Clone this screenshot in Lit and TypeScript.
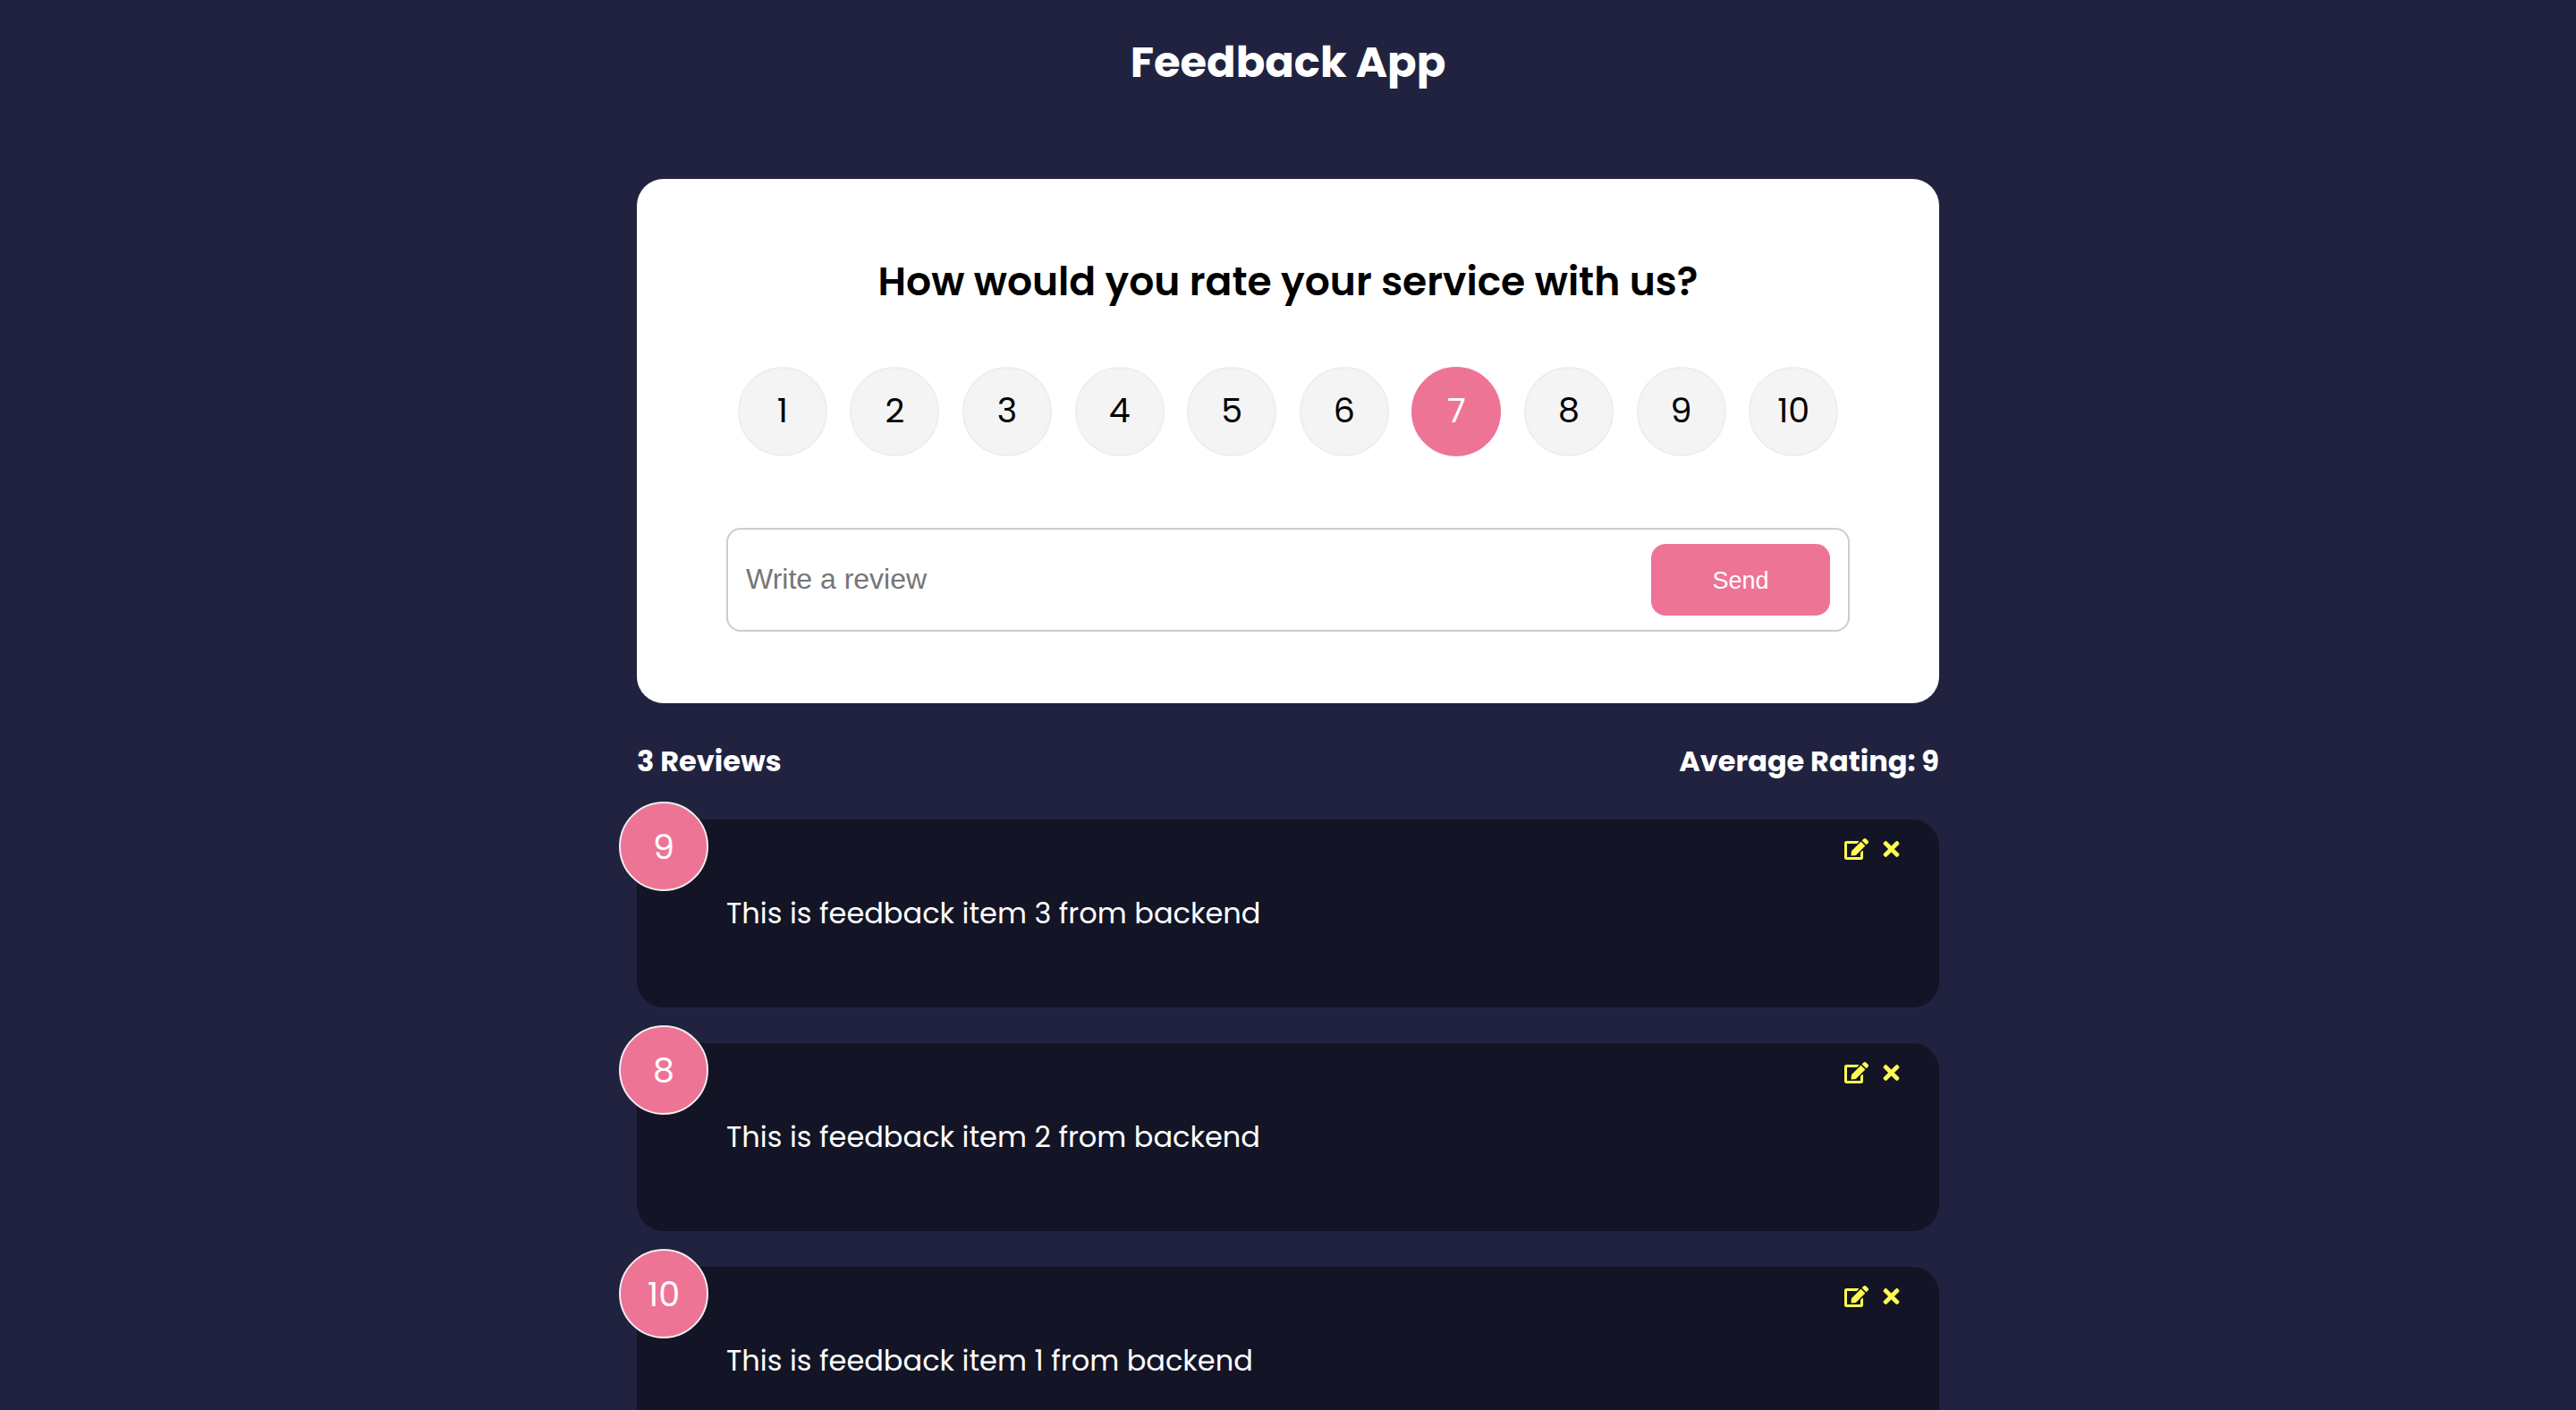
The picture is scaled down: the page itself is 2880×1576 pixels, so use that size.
import { LitElement, html, css } from "lit";
import { customElement, property, state } from "lit/decorators.js";
import { classMap } from "lit/directives/class-map.js";

interface Feedback {
  id: number;
  rating: number;
  text: string;
}

@customElement("feedback-item")
export class FeedbackItem extends LitElement {
  @property({ attribute: false }) item!: Feedback;

  static styles = css`
    :host {
      display: block;
    }
    .card {
      position: relative;
      box-sizing: border-box;
      min-height: 210px;
      padding: 80px 100px;
      border-radius: 30px;
      background: #131426;
      color: #fff;
    }
    .badge {
      position: absolute;
      top: -20px;
      left: -20px;
      box-sizing: border-box;
      width: 100px;
      height: 100px;
      border: 2px solid #eee;
      border-radius: 50%;
      background: #ee7496;
      font-size: 38px;
      line-height: 98px;
      text-align: center;
    }
    .actions {
      position: absolute;
      top: 20px;
      right: 40px;
      display: flex;
      gap: 12px;
    }
    .action {
      display: flex;
      padding: 0;
      border: 0;
      background: none;
      color: #fffd54;
      cursor: pointer;
    }
    .icon {
      display: block;
      width: 27px;
      height: 26px;
      fill: currentColor;
    }
    .text {
      margin: 0;
      font-size: 32px;
      line-height: 50px;
    }
  `;

  private emit(name: string) {
    this.dispatchEvent(new CustomEvent(name, { detail: this.item.id, bubbles: true, composed: true }));
  }

  render() {
    return html`
      <article class="card">
        <div class="badge">${this.item.rating}</div>
        <div class="actions">
          <button class="action" type="button" aria-label="Edit" @click=${() => this.emit("edit-item")}>
            <svg class="icon" viewBox="0 0 576 512" aria-hidden="true">
              <path
                d="M402.6 83.2l90.2 90.2c3.8 3.8 3.8 10 0 13.8L274.4 405.6l-92.8 10.3c-12.4 1.4-22.9-9.1-21.5-21.5l10.3-92.8L388.8 83.2c3.8-3.8 10-3.8 13.8 0zm162-22.9l-48.8-48.8c-15.2-15.2-39.9-15.2-55.2 0l-35.4 35.4c-3.8 3.8-3.8 10 0 13.8l90.2 90.2c3.8 3.8 10 3.8 13.8 0l35.4-35.4c15.2-15.3 15.2-40 0-55.2zM384 346.2V448H64V128h229.8c3.2 0 6.2-1.3 8.5-3.5l40-40c7.6-7.6 2.2-20.5-8.5-20.5H48C21.5 64 0 85.5 0 112v352c0 26.5 21.5 48 48 48h352c26.5 0 48-21.5 48-48V306.2c0-10.7-12.9-16-20.5-8.5l-40 40c-2.2 2.3-3.5 5.3-3.5 8.5z"
              />
            </svg>
          </button>
          <button class="action" type="button" aria-label="Delete" @click=${() => this.emit("delete-item")}>
            <svg class="icon" viewBox="0 0 352 512" aria-hidden="true">
              <path
                d="M242.72 256l100.07-100.07c12.28-12.28 12.28-32.19 0-44.48l-22.24-22.24c-12.28-12.28-32.19-12.28-44.48 0L176 189.28 75.93 89.21c-12.28-12.28-32.19-12.28-44.48 0L9.21 111.45c-12.28 12.28-12.28 32.19 0 44.48L109.28 256 9.21 356.07c-12.28 12.28-12.28 32.19 0 44.48l22.24 22.24c12.28 12.28 32.2 12.28 44.48 0L176 322.72l100.07 100.07c12.28 12.28 32.2 12.28 44.48 0l22.24-22.24c12.28-12.28 12.28-32.19 0-44.48L242.72 256z"
              />
            </svg>
          </button>
        </div>
        <p class="text">${this.item.text}</p>
      </article>
    `;
  }
}

@customElement("app-root")
export class AppRoot extends LitElement {
  @state() private rating = 7;
  @state() private draft = "";
  @state() private items: Feedback[] = [
    { id: 3, rating: 9, text: "This is feedback item 3 from backend" },
    { id: 2, rating: 8, text: "This is feedback item 2 from backend" },
    { id: 1, rating: 10, text: "This is feedback item 1 from backend" },
  ];

  static styles = css`
    :host {
      display: block;
      box-sizing: border-box;
      height: 100vh;
      overflow-y: auto;
      scrollbar-width: none;
      background: #212240;
      color: #fff;
      font-family: Poppins, Inter, sans-serif;
    }
    .header {
      padding: 32px 40px;
      text-align: center;
    }
    .title {
      margin: 0;
      font-size: 48px;
      font-weight: 700;
      line-height: 76px;
    }
    .container {
      box-sizing: border-box;
      max-width: 1536px;
      margin: 0 auto;
      padding: 60px 40px;
    }
    .panel {
      padding: 80px 100px;
      border-radius: 30px;
      background: #fff;
      color: #000;
    }
    .question {
      margin: 0;
      font-size: 44px;
      font-weight: 600;
      line-height: 70px;
      text-align: center;
    }
    .ratings {
      display: flex;
      justify-content: space-around;
      margin: 60px 0 80px;
    }
    .rating {
      position: relative;
      box-sizing: border-box;
      width: 100px;
      height: 100px;
      border: 2px solid #eee;
      border-radius: 50%;
      background: #f4f4f4;
      font-size: 38px;
      line-height: 94px;
      text-align: center;
      cursor: pointer;
    }
    .rating.selected {
      border-color: #ee7496;
      background: #ee7496;
      color: #fff;
    }
    .hidden {
      position: absolute;
      opacity: 0;
      pointer-events: none;
    }
    .composer {
      display: flex;
      align-items: center;
      padding: 16px 20px;
      border: 2px solid #ccc;
      border-radius: 16px;
    }
    .review {
      flex: 1;
      min-width: 0;
      padding: 0 0 2px;
      border: 0;
      outline: 0;
      background: none;
      font: 32px "Liberation Sans", Arial, sans-serif;
    }
    .review::placeholder {
      color: #757575;
    }
    .send {
      width: 200px;
      height: 80px;
      padding: 2px 0 0;
      border: 0;
      border-radius: 16px;
      background: #ee7496;
      color: #fff;
      font: 27px "Liberation Sans", Arial, sans-serif;
      cursor: pointer;
    }
    .stats {
      display: flex;
      justify-content: space-between;
      padding: 40px 0;
      font-size: 32px;
      font-weight: 700;
      line-height: 50px;
    }
    .stat {
      margin: 0;
    }
    .list {
      display: grid;
      gap: 40px;
    }
  `;

  private send(e: Event) {
    e.preventDefault();
    const text = this.draft.trim();
    if (!text) return;
    this.items = [{ id: Date.now(), rating: this.rating, text }, ...this.items];
    this.draft = "";
  }

  private remove(e: CustomEvent<number>) {
    this.items = this.items.filter((item) => item.id !== e.detail);
  }

  private edit(e: CustomEvent<number>) {
    const item = this.items.find((entry) => entry.id === e.detail);
    if (!item) return;
    this.draft = item.text;
    this.rating = item.rating;
  }

  private get average() {
    if (!this.items.length) return 0;
    const total = this.items.reduce((sum, item) => sum + item.rating, 0);
    return Math.round((total / this.items.length) * 10) / 10;
  }

  render() {
    return html`
      <header class="header"><h1 class="title">Feedback App</h1></header>
      <main class="container">
        <form class="panel" @submit=${this.send}>
          <h2 class="question" id="question">How would you rate your service with us?</h2>
          <div class="ratings" role="radiogroup" aria-labelledby="question">
            ${Array.from({ length: 10 }, (_, i) => i + 1).map(
              (n) => html`
                <label class=${classMap({ rating: true, selected: n === this.rating })}>
                  <input
                    class="hidden"
                    type="radio"
                    name="rating"
                    .value=${String(n)}
                    .checked=${n === this.rating}
                    @change=${() => (this.rating = n)}
                  />${n}
                </label>
              `
            )}
          </div>
          <div class="composer">
            <input
              class="review"
              type="text"
              placeholder="Write a review"
              aria-label="Write a review"
              .value=${this.draft}
              @input=${(e: Event) => (this.draft = (e.target as HTMLInputElement).value)}
            />
            <button class="send" type="submit">Send</button>
          </div>
        </form>
        <div class="stats">
          <p class="stat">${this.items.length} Reviews</p>
          <p class="stat">Average Rating: ${this.average}</p>
        </div>
        <div class="list" @delete-item=${this.remove} @edit-item=${this.edit}>
          ${this.items.map((item) => html`<feedback-item .item=${item}></feedback-item>`)}
        </div>
      </main>
    `;
  }
}
